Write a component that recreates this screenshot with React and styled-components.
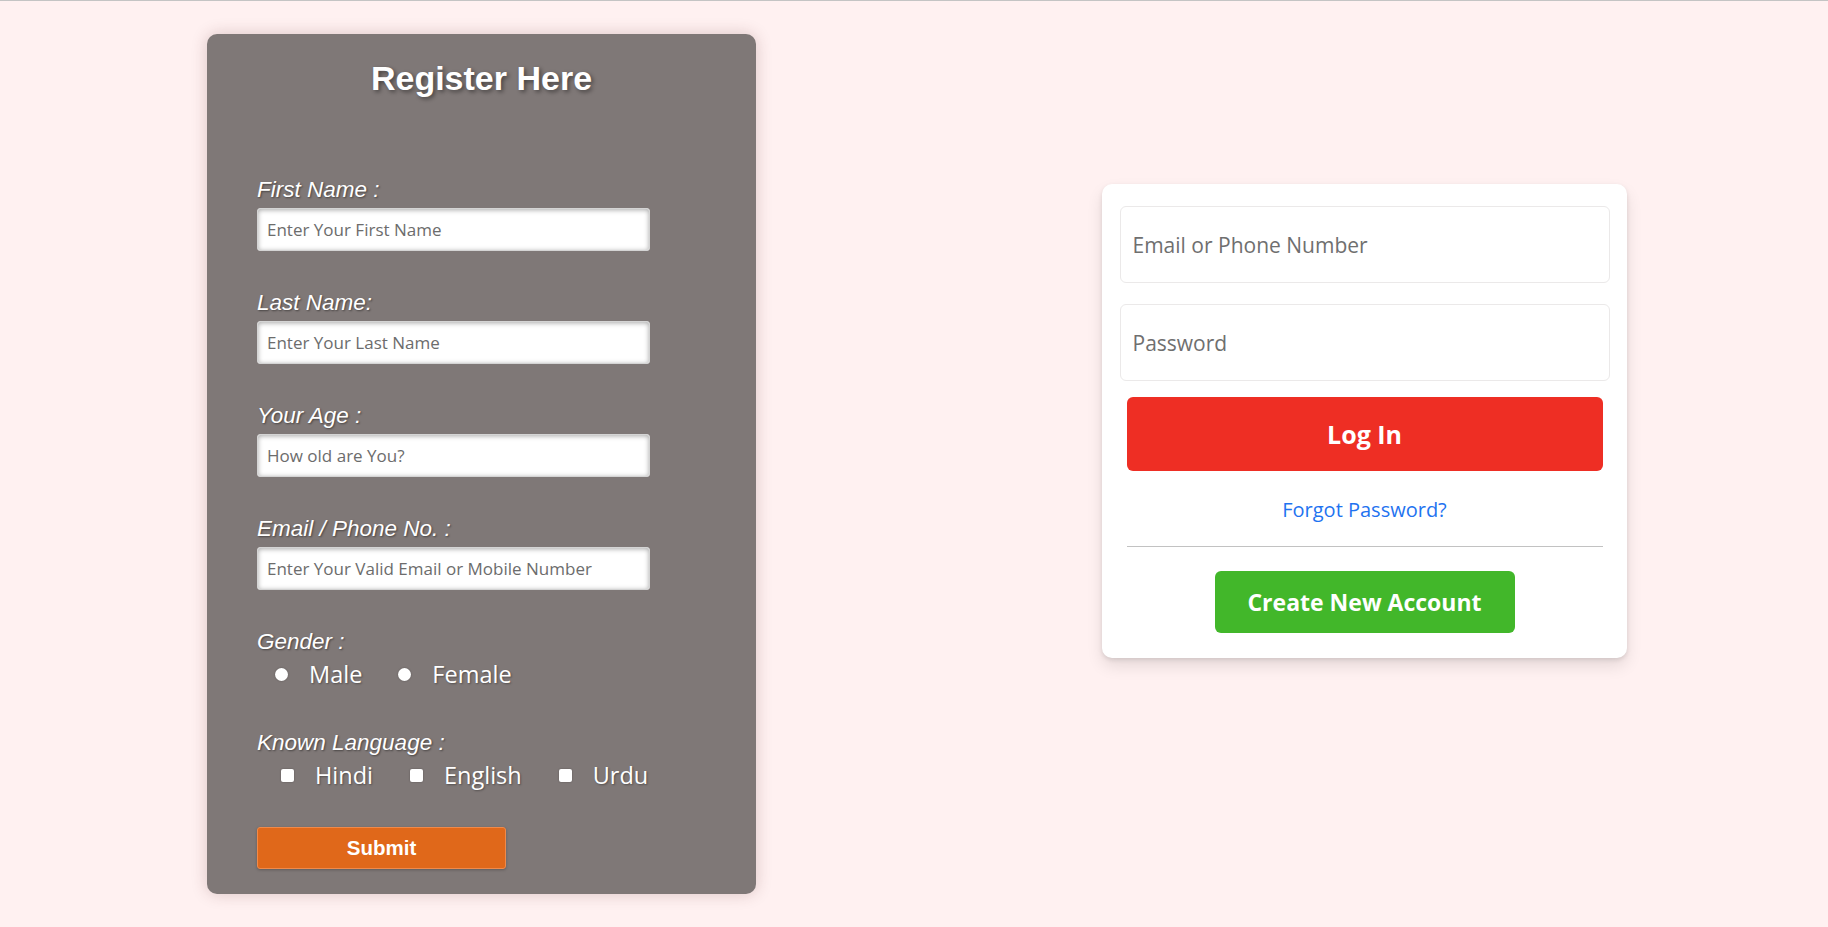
import styled, { createGlobalStyle } from "styled-components";

const GlobalStyle = createGlobalStyle`
  * {
    box-sizing: border-box;
  }
  body {
    margin: 0;
    background-color: #fff1f1;
    font-family: "Open Sans", "Liberation Sans", sans-serif;
  }
`;

const fields = [
  { label: "First Name :", placeholder: "Enter Your First Name" },
  { label: "Last Name:", placeholder: "Enter Your Last Name" },
  { label: "Your Age :", placeholder: "How old are You?" },
  {
    label: "Email / Phone No. :",
    placeholder: "Enter Your Valid Email or Mobile Number",
  },
];

const App = () => {
  return (
    <Page>
      <GlobalStyle />
      <RegisterCard>
        <Title>Register Here</Title>
        {fields.map((f) => (
          <div key={f.label}>
            <Label>{f.label}</Label>
            <TextInput type="text" placeholder={f.placeholder} />
          </div>
        ))}
        <Label $bottom={3}>Gender :</Label>
        <OptionRow>
          <Radio type="radio" name="gender" />
          <OptionText>Male</OptionText>
          <Radio type="radio" name="gender" />
          <OptionText>Female</OptionText>
        </OptionRow>
        <Label $top={40} $bottom={3}>
          Known Language :
        </Label>
        <OptionRow>
          <Check type="checkbox" />
          <OptionText>Hindi</OptionText>
          <Check type="checkbox" />
          <OptionText>English</OptionText>
          <Check type="checkbox" />
          <OptionText>Urdu</OptionText>
        </OptionRow>
        <SubmitButton>Submit</SubmitButton>
      </RegisterCard>

      <LoginCard>
        <LoginInput type="text" placeholder="Email or Phone Number" />
        <LoginInput type="password" placeholder="Password" />
        <LoginButton>Log In</LoginButton>
        <Forgot href="#">Forgot Password?</Forgot>
        <Divider />
        <CreateButton>Create New Account</CreateButton>
      </LoginCard>
    </Page>
  );
};

export default App;

const Page = styled.div`
  display: flex;
  align-items: flex-start;
  min-height: 100vh;
  padding-left: 207px;
  border-top: 1px solid #c4c4c4;
`;

const RegisterCard = styled.form`
  width: 549px;
  margin-top: 33px;
  padding: 25px 50px 25px;
  background-color: #7f7877;
  border-radius: 10px;
  box-shadow: 0 0 16px rgba(90, 40, 40, 0.22);
  color: white;
`;

const Title = styled.h1`
  margin: 0 0 80px;
  text-align: center;
  font-family: "Liberation Sans", Arial, sans-serif;
  font-size: 34px;
  line-height: 38px;
  font-weight: bold;
  text-shadow: 2px 2px 4px rgba(0, 0, 0, 0.45);
`;

const Label = styled.label`
  display: block;
  margin-top: ${(p) => (p.$top ? p.$top + "px" : "0")};
  margin-bottom: ${(p) => (p.$bottom !== undefined ? p.$bottom : 5)}px;
  font-family: "Liberation Sans", Arial, sans-serif;
  font-style: italic;
  font-size: 22.5px;
  line-height: 26px;
  text-shadow: 1px 1px 2px rgba(0, 0, 0, 0.45);
`;

const TextInput = styled.input`
  display: block;
  width: 393px;
  height: 43px;
  margin-bottom: 39px;
  padding: 0 9px;
  border: 1px solid #d4d4d4;
  border-radius: 3px;
  background: white;
  box-shadow: inset 0 1px 5px rgba(0, 0, 0, 0.35);
  font-family: "Open Sans", sans-serif;
  font-size: 17px;
  color: #333;
  outline: none;

  &::placeholder {
    color: #6c6c6c;
  }
`;

const OptionRow = styled.div`
  display: flex;
  align-items: center;
  height: 32px;
`;

const Radio = styled.input`
  appearance: none;
  flex: none;
  width: 13px;
  height: 13px;
  margin: 0 21px 0 18px;
  border-radius: 50%;
  background: white;
  box-shadow: 0 0 2px rgba(0, 0, 0, 0.3);

  & ~ & {
    margin-left: 36px;
  }
`;

const Check = styled.input`
  appearance: none;
  flex: none;
  width: 13px;
  height: 13px;
  margin: 0 21px 0 24px;
  border-radius: 2px;
  background: white;
  box-shadow: 0 0 2px rgba(0, 0, 0, 0.3);

  & ~ & {
    margin-left: 37px;
  }
`;

const OptionText = styled.span`
  font-family: "Open Sans", sans-serif;
  font-size: 23.5px;
  line-height: 32px;
  color: white;
  text-shadow: 1px 1px 2px rgba(0, 0, 0, 0.35);
`;

const SubmitButton = styled.button`
  display: block;
  width: 249px;
  height: 42px;
  margin-top: 36px;
  background-color: #e0681a;
  border: 1px solid #f08a4a;
  border-radius: 3px;
  box-shadow: 0 1px 3px rgba(0, 0, 0, 0.25);
  color: white;
  font-family: "Liberation Sans", Arial, sans-serif;
  font-weight: bold;
  font-size: 20.5px;
  cursor: pointer;
`;

const LoginCard = styled.div`
  display: flex;
  flex-direction: column;
  align-items: center;
  width: 525px;
  margin-top: 183px;
  margin-left: 346px;
  padding: 22px 17px 25px;
  background: white;
  border-radius: 10px;
  box-shadow: 0 2px 4px rgba(0, 0, 0, 0.1), 0 8px 16px rgba(0, 0, 0, 0.1);
`;

const LoginInput = styled.input`
  width: 490px;
  height: 77px;
  margin-bottom: 21px;
  padding: 0 12px;
  border: 1px solid #ebe9e9;
  border-radius: 6px;
  font-family: "Open Sans", sans-serif;
  font-size: 21px;
  color: #333;
  outline: none;

  &::placeholder {
    color: #6f6f6f;
  }

  & + & {
    margin-bottom: 16px;
  }
`;

const LoginButton = styled.button`
  width: 476px;
  height: 74px;
  border: none;
  border-radius: 6px;
  background-color: #ee2e24;
  color: white;
  font-family: "Open Sans", sans-serif;
  font-weight: 700;
  font-size: 25px;
  cursor: pointer;
`;

const Forgot = styled.a`
  margin-top: 25px;
  color: #1f73f0;
  text-decoration: none;
  font-family: "Open Sans", sans-serif;
  font-size: 20px;
  line-height: 27px;
`;

const Divider = styled.hr`
  width: 476px;
  margin: 23px 0 24px;
  border: none;
  border-top: 1px solid #c2c2c2;
`;

const CreateButton = styled.button`
  width: 300px;
  height: 62px;
  border: none;
  border-radius: 6px;
  background-color: #42b72a;
  color: white;
  font-family: "Open Sans", sans-serif;
  font-weight: 700;
  font-size: 23px;
  cursor: pointer;
`;
